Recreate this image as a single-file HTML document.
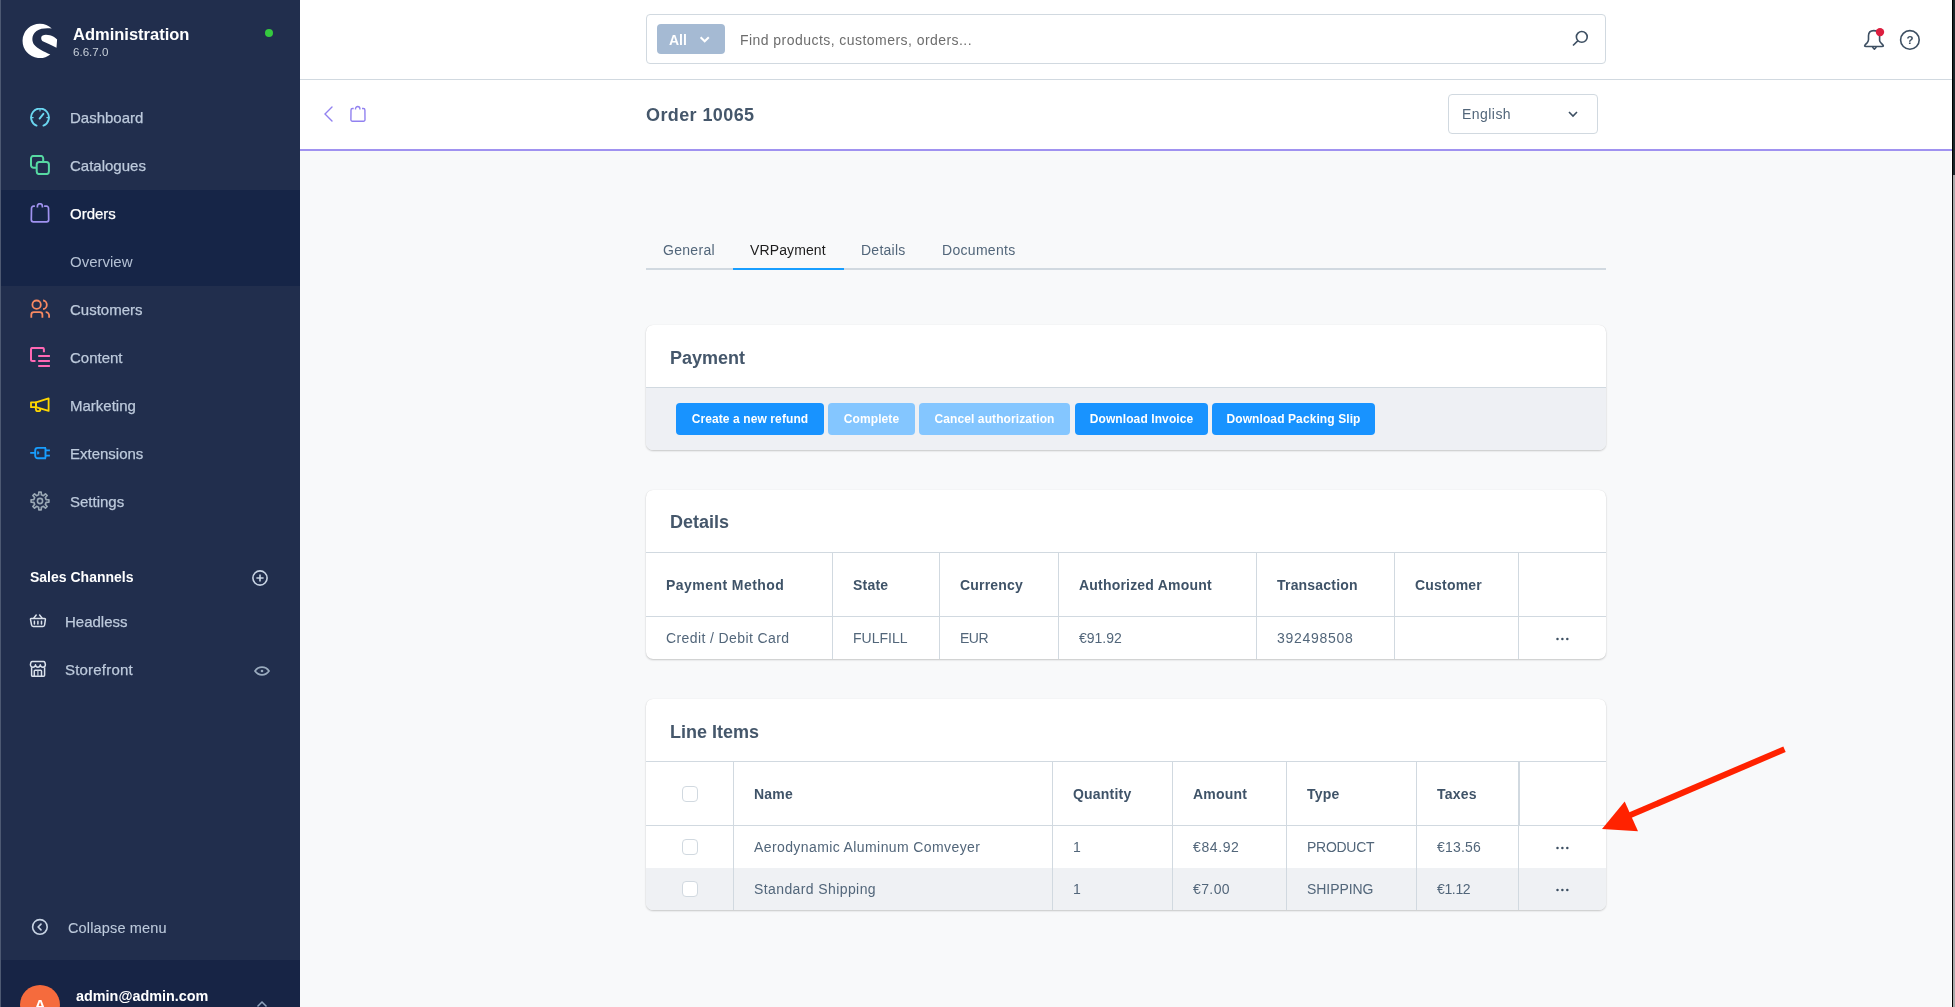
<!DOCTYPE html>
<html><head><meta charset="utf-8">
<style>
*{box-sizing:border-box;margin:0;padding:0}
html,body{width:1955px;height:1007px;overflow:hidden;background:#f8f9fa;font-family:"Liberation Sans",sans-serif}
#root{position:absolute;left:0;top:0;width:1955px;height:1007px;will-change:transform}
.a{position:absolute}
.t{position:absolute;white-space:nowrap;line-height:20px;height:20px}
#side{left:0;top:0;width:300px;height:1007px;background:#212e4d}
#side .mi{font-size:15px;color:#bdcadc;left:70px;-webkit-text-stroke:.25px #bdcadc}
.ic{position:absolute;width:20px;height:20px}
#hdr{left:300px;top:0;width:1652px;height:80px;background:#fff;border-bottom:1px solid #d1d9e0}
#smart{left:300px;top:80px;width:1652px;height:71px;background:#fff;border-bottom:2px solid #a092f0}
.card{position:absolute;left:646px;width:960px;background:#fff;border-radius:7px;box-shadow:0 1px 2px rgba(0,0,0,.2),0 0 1px rgba(0,0,0,.12);overflow:hidden}
.ctitle{position:absolute;left:24px;font-size:18px;font-weight:700;color:#45576b;letter-spacing:0}
.hl{position:absolute;left:0;width:960px;height:1px;background:#d1d9e0}
.vl{position:absolute;width:1px;background:#d1d9e0}
.th{font-size:14px;font-weight:700;color:#3f5368;letter-spacing:.2px}
.td{font-size:14px;color:#52667a;letter-spacing:.4px}
.btn{position:absolute;top:78px;height:32px;border-radius:4px;background:#1893ff;color:#fff;font-size:12px;font-weight:700;line-height:32px;text-align:center;letter-spacing:.1px}
.btn.dis{background:#84c6ff}
.cb{position:absolute;left:36px;width:16px;height:16px;border:1px solid #d1d9e0;border-radius:4px;background:#fff}
.dots{position:absolute;width:14px;height:4px}
</style></head><body><div id="root">

<!-- SIDEBAR -->
<div id="side" class="a">
  <div class="a" style="left:0;top:0;width:1px;height:1007px;background:#4d5972"></div>
  <!-- logo -->
  <svg class="a" style="left:18px;top:18px" width="44" height="44" viewBox="18 18 44 44">
    <path d="M51.8 28.6A17.2 17.2 0 1 0 50.3 54.5C44 51.5 37.5 49 34 44.5C31.3 40.5 31.8 34.5 36.5 31C40.5 28.3 46.5 28 51.8 28.6Z" fill="#fff"/>
    <path d="M41.2 37.5C41.5 34.5 46 34 50 35.3C53 36.3 55.5 37.8 57.1 39.5L56.5 47.8C52 45.5 46.5 43.2 43.3 41.6C41.8 40.8 41 39.5 41.2 37.5Z" fill="#fff"/>
  </svg>
  <div class="t" style="left:73px;top:24px;font-size:16.5px;font-weight:700;color:#fff">Administration</div>
  <div class="t" style="left:73px;top:42px;font-size:11.6px;color:#c8d0da">6.6.7.0</div>
  <div class="a" style="left:265px;top:29px;width:8px;height:8px;border-radius:50%;background:#35c93f"></div>

  <!-- menu -->
  <svg class="ic" style="left:30px;top:108px" viewBox="0 0 20 20" fill="none" stroke="#6bd6f0" stroke-width="1.9" stroke-linecap="round">
    <path d="M6.5 17.6A8.9 8.9 0 1 1 13.5 17.6"/><path d="M10 1v2M1.2 9.6h2M18.8 9.6h-2" stroke-width="1.1"/><path d="M9.6 10.6 13.4 5.8"/>
  </svg>
  <div class="t mi" style="top:108px">Dashboard</div>

  <svg class="ic" style="left:30px;top:155px" viewBox="0 0 20 20" fill="none" stroke="#57d9a3" stroke-width="2">
    <path d="M6.7 12.8H3.5A2.5 2.5 0 0 1 1 10.3V3.4A2.5 2.5 0 0 1 3.5 0.9H10.7A2.5 2.5 0 0 1 13.2 3.4V6.9"/>
    <rect x="6.7" y="6.9" width="12.2" height="12.2" rx="2.5"/>
  </svg>
  <div class="t mi" style="top:156px">Catalogues</div>

  <div class="a" style="left:1px;top:190px;width:299px;height:96px;background:#162547"></div>
  <svg class="ic" style="left:30px;top:203px" viewBox="0 0 20 20" fill="none" stroke="#a092f0" stroke-width="1.7" stroke-linejoin="round">
    <path d="M4.9 3.2H3.5A2 2 0 0 0 1.5 5.2L1.3 16.8A2 2 0 0 0 3.3 18.8H16.7A2 2 0 0 0 18.7 16.8L18.5 5.2A2 2 0 0 0 16.5 3.2H14.1"/>
    <path d="M7.4 4.6V3.2A2.5 2.5 0 0 1 12.4 3.2V4.6"/>
  </svg>
  <div class="t mi" style="top:204px;color:#fff;-webkit-text-stroke:.25px #fff">Orders</div>
  <div class="t mi" style="top:252px;color:#b4c1d4;-webkit-text-stroke:0">Overview</div>

  <svg class="ic" style="left:30px;top:299px" viewBox="0 0 20 20" fill="none" stroke="#f88962" stroke-width="1.8">
    <circle cx="6.6" cy="5.7" r="4.2"/><path d="M13.1 1.5A3.7 4.25 0 0 1 13.1 10"/><path d="M1.3 18.8V15.7A2.5 2.5 0 0 1 3.8 13.2H9.9A2.5 2.5 0 0 1 12.4 15.7V18.8"/><path d="M15.7 13.2A3.4 3.4 0 0 1 19.1 16.6V18.8"/>
  </svg>
  <div class="t mi" style="top:300px">Customers</div>

  <svg class="ic" style="left:30px;top:347px" viewBox="0 0 20 20" fill="none" stroke="#ff68b4" stroke-width="2">
    <path d="M5.5 14.1H2.5A1.5 1.5 0 0 1 1 12.6V2.4A1.5 1.5 0 0 1 2.5 0.9H12.4A1.5 1.5 0 0 1 13.9 2.4V5.2"/><path d="M8.2 9.1H19.9M8.2 14.1H19.9M8.2 19H19.9"/>
  </svg>
  <div class="t mi" style="top:348px">Content</div>

  <svg class="ic" style="left:30px;top:396px" viewBox="0 0 20 20" fill="none" stroke="#ffd700" stroke-width="1.8" stroke-linejoin="round">
    <path d="M1 6.4H6V11.2H1Z"/><path d="M6 6.3 18.6 2.3V14.9L6 11.2Z"/><path d="M5.6 11.6 6.2 14.5A1 1 0 0 0 7.2 15.2H9.4A1 1 0 0 0 10.3 14L9.8 12.4"/>
  </svg>
  <div class="t mi" style="top:396px">Marketing</div>

  <svg class="ic" style="left:30px;top:443px" viewBox="0 0 20 20" fill="none" stroke="#189eff" stroke-width="1.9">
    <path d="M7.7 4.9H15.2L15.5 6V13.9L15.2 15.2H7.7A2.5 2.5 0 0 1 5.2 12.7V7.4A2.5 2.5 0 0 1 7.7 4.9Z"/><path d="M0.2 9.9H5.2M15.5 7.4H19.9M15.5 12.6H19.9"/><path d="M7.6 8.6A1.3 1.3 0 0 1 7.6 11.2Z" fill="#189eff" stroke-width="0.8"/>
  </svg>
  <div class="t mi" style="top:444px">Extensions</div>

  <svg class="ic" style="left:30px;top:491px" viewBox="0 0 20 20" fill="none" stroke="#9aa8b5" stroke-width="1.6" stroke-linejoin="round">
    <path d="M8.63 3.85 L8.80 1.08 L11.20 1.08 L11.37 3.85 L13.38 4.68 L15.46 2.85 L17.15 4.54 L15.32 6.62 L16.15 8.63 L18.92 8.80 L18.92 11.20 L16.15 11.37 L15.32 13.38 L17.15 15.46 L15.46 17.15 L13.38 15.32 L11.37 16.15 L11.20 18.92 L8.80 18.92 L8.63 16.15 L6.62 15.32 L4.54 17.15 L2.85 15.46 L4.68 13.38 L3.85 11.37 L1.08 11.20 L1.08 8.80 L3.85 8.63 L4.68 6.62 L2.85 4.54 L4.54 2.85 L6.62 4.68Z"/><circle cx="10" cy="10" r="2.6"/>
  </svg>
  <div class="t mi" style="top:492px">Settings</div>

  <div class="t" style="left:30px;top:567px;font-size:14px;font-weight:700;color:#fff">Sales Channels</div>
  <svg class="a" style="left:248px;top:566px" width="24" height="24" viewBox="248 566 24 24" fill="none" stroke="#c8d4e4" stroke-width="1.6">
    <circle cx="260" cy="578" r="7.1"/><path d="M260 574.4v7.2M256.4 578h7.2"/>
  </svg>

  <svg class="a" style="left:26px;top:608px" width="24" height="24" viewBox="26 608 24 24" fill="none" stroke="#dbe2ec" stroke-width="1.5" stroke-linejoin="round" stroke-linecap="round">
    <path d="M31.2 618.5H44.6A0.8 0.8 0 0 1 45.4 619.4L44.6 625A1.6 1.6 0 0 1 43 626.4H33.2A1.6 1.6 0 0 1 31.6 625L30.5 619.4A0.8 0.8 0 0 1 31.2 618.5Z"/>
    <path d="M33.9 617.9 36.2 615.1M39.6 615.1 42 617.9M34.4 621.2V624M37.9 621.2V624M41.5 621.2V624"/>
  </svg>
  <div class="t mi" style="top:612px;left:65px">Headless</div>
  <svg class="a" style="left:26px;top:656px" width="24" height="24" viewBox="26 656 24 24" fill="none" stroke="#dbe2ec" stroke-width="1.5" stroke-linejoin="round">
    <path d="M32.4 661.5H43.4A1.6 1.6 0 0 1 44.9 662.5L45.4 664.6C45.4 666.2 44.3 667.2 42.9 667.2C41.5 667.2 40.4 666.2 40.3 664.8C40.1 666.2 39.1 667.2 37.9 667.2C36.7 667.2 35.7 666.2 35.5 664.8C35.4 666.2 34.3 667.2 32.9 667.2C31.5 667.2 30.4 666.2 30.4 664.6L30.9 662.5A1.6 1.6 0 0 1 32.4 661.5Z"/>
    <path d="M31.6 667.2V675.2A1 1 0 0 0 32.6 676.2H43.6A1 1 0 0 0 44.6 675.2V667.2"/>
    <path d="M34.3 676.2V671A0.8 0.8 0 0 1 35.1 670.2H40.7A0.8 0.8 0 0 1 41.5 671V676.2"/>
    <path d="M37.9 670.8V676" stroke="#aeb9c8"/>
  </svg>
  <div class="t mi" style="top:660px;left:65px;letter-spacing:.2px">Storefront</div>
  <svg class="a" style="left:252px;top:662px" width="20" height="18" viewBox="252 662 20 18" fill="none" stroke="#9aabbe" stroke-width="1.7">
    <path d="M255 671C256.8 668.4 259.2 667.2 262 667.2S267.2 668.4 269 671C267.2 673.6 264.8 674.8 262 674.8S256.8 673.6 255 671Z"/><circle cx="262" cy="671" r="1.3" fill="#9aabbe" stroke="none"/>
  </svg>

  <svg class="a" style="left:30px;top:917px" width="20" height="20" viewBox="30 917 20 20" fill="none" stroke="#c8d4e4" stroke-width="1.6" stroke-linecap="round" stroke-linejoin="round">
    <circle cx="39.9" cy="926.9" r="7.3"/><path d="M41 924.1 38.1 927 41 929.9"/>
  </svg>
  <div class="t mi" style="top:918px;left:68px;font-size:14.5px;letter-spacing:.15px;-webkit-text-stroke:.1px #bdcadc">Collapse menu</div>

  <div class="a" style="left:1px;top:960px;width:299px;height:47px;background:#172445"></div>
  <div class="a" style="left:20px;top:985px;width:40px;height:40px;border-radius:50%;background:#f56b3d"></div>
  <div class="t" style="left:20px;top:995px;width:40px;text-align:center;font-size:15.5px;font-weight:700;color:#fff">A</div>
  <div class="t" style="left:76px;top:986px;font-size:14.4px;font-weight:700;color:#fff">admin@admin.com</div>
  <svg class="a" style="left:256px;top:1000px" width="12" height="8" viewBox="0 0 12 8" fill="none" stroke="#8fa3bd" stroke-width="1.5"><path d="M1.5 6.5 6 2l4.5 4.5"/></svg>
</div>

<!-- TOP HEADER -->
<div id="hdr" class="a"></div>
<div class="a" style="left:646px;top:14px;width:960px;height:50px;border:1px solid #d1d9e0;border-radius:4px;background:#fff"></div>
<div class="a" style="left:657px;top:24px;width:68px;height:30px;border-radius:4px;background:#a5bad3"></div>
<div class="t" style="left:669px;top:30px;font-size:14px;font-weight:700;color:#fff">All</div>
<svg class="a" style="left:699px;top:35px" width="12" height="10" viewBox="0 0 12 10" fill="none" stroke="#fff" stroke-width="2"><path d="M1.6 2.2 5.7 6.3 9.8 2.2"/></svg>
<div class="t" style="left:740px;top:30px;font-size:14px;color:#6d6d6d;letter-spacing:.45px">Find products, customers, orders...</div>
<svg class="a" style="left:1571px;top:30px" width="18" height="18" viewBox="0 0 18 18" fill="none" stroke="#3d4f62" stroke-width="1.6"><circle cx="10.8" cy="6.9" r="5.4"/><path d="M7 10.6 2 15.5"/></svg>

<svg class="a" style="left:1855px;top:20px" width="75" height="40" viewBox="1855 20 75 40" fill="none" stroke="#3d4f62" stroke-width="1.6" stroke-linejoin="round">
  <path d="M1879.6 36V40.3C1879.6 41.4 1880 42 1880.8 42.8L1882.8 44.9C1883.8 46 1883.4 46.5 1882 46.5H1866C1864.6 46.5 1864.2 46 1865.1 44.9L1867.3 42.6C1868.1 41.7 1868.5 41 1868.5 39.6V35.8C1868.5 32.6 1870.6 30.6 1873.8 30.6C1875.2 30.6 1876.3 30.8 1877.2 31.2"/>
  <path d="M1872.4 47 1874.4 49.2 1876.4 47"/>
  <circle cx="1880" cy="32.1" r="4.2" fill="#dc1e3f" stroke="none"/>
  <circle cx="1909.9" cy="39.9" r="9.3"/>
</svg>
<div class="t" style="left:1899px;top:30px;width:22px;text-align:center;font-size:11.5px;font-weight:700;color:#3d4f62">?</div>

<!-- SMART BAR -->
<div id="smart" class="a"></div>
<svg class="a" style="left:321px;top:105px" width="14" height="18" viewBox="0 0 14 18" fill="none" stroke="#9181f0" stroke-width="1.4" stroke-linecap="round"><path d="M11 2 4 9l7 7"/></svg>
<svg class="a" style="left:345px;top:100px" width="25" height="25" viewBox="345 100 25 25" fill="none" stroke="#9181f0" stroke-width="1.4" stroke-linejoin="round">
  <path d="M353.7 108.5H352.5A1.5 1.5 0 0 0 351 110L350.9 119.7A1.5 1.5 0 0 0 352.4 121.2H363.5A1.5 1.5 0 0 0 365 119.7L364.9 110A1.5 1.5 0 0 0 363.4 108.5H362"/>
  <path d="M355.5 109.6V108.7A2.2 2.2 0 0 1 359.9 108.7V109.6"/>
</svg>
<div class="t" style="left:646px;top:104px;font-size:18px;font-weight:700;color:#45576b;letter-spacing:.4px;height:22px;line-height:22px">Order 10065</div>
<div class="a" style="left:1448px;top:94px;width:150px;height:40px;border:1px solid #d1d9e0;border-radius:4px;background:#fff"></div>
<div class="t" style="left:1462px;top:104px;font-size:14px;color:#52667a;letter-spacing:.45px">English</div>
<svg class="a" style="left:1567px;top:110px" width="12" height="8" viewBox="0 0 12 8" fill="none" stroke="#3d4f62" stroke-width="1.6"><path d="M2 2l4 4 4-4"/></svg>
<div class="a" style="left:1951px;top:151px;width:1px;height:856px;background:#fff"></div>
<div class="a" style="left:1952px;top:0;width:3px;height:1007px;background:#1c2629"></div>
<div class="a" style="left:1952px;top:0;width:1px;height:1007px;background:#000"></div>
<div class="a" style="left:1953px;top:175px;width:2px;height:832px;background:#a9a9a9"></div>

<!-- TABS -->
<div class="a" style="left:646px;top:268px;width:960px;height:2px;background:#d1d9e0"></div>
<div class="a" style="left:733px;top:268px;width:111px;height:2px;background:#189eff"></div>
<div class="t" style="left:663px;top:240px;font-size:14px;color:#52667a;letter-spacing:.3px">General</div>
<div class="t" style="left:750px;top:240px;font-size:14px;color:#1c1c1c;letter-spacing:.12px">VRPayment</div>
<div class="t" style="left:861px;top:240px;font-size:14px;color:#52667a;letter-spacing:.25px">Details</div>
<div class="t" style="left:942px;top:240px;font-size:14px;color:#52667a;letter-spacing:.3px">Documents</div>


<!-- PAYMENT CARD -->
<div class="card" style="top:325px;height:125px">
  <div class="t ctitle" style="top:22px;height:22px;line-height:22px">Payment</div>
  <div class="a" style="left:0;top:62px;width:960px;height:63px;background:#eef0f4;border-top:1px solid #d1d9e0"></div>
  <div class="btn" style="left:30px;width:148px">Create a new refund</div>
  <div class="btn dis" style="left:182px;width:87px">Complete</div>
  <div class="btn dis" style="left:273px;width:151px">Cancel authorization</div>
  <div class="btn" style="left:429px;width:133px">Download Invoice</div>
  <div class="btn" style="left:566px;width:163px">Download Packing Slip</div>
</div>

<!-- DETAILS CARD -->
<div class="card" style="top:490px;height:169px">
  <div class="t ctitle" style="top:21px;height:22px;line-height:22px">Details</div>
  <div class="hl" style="top:62px"></div>
  <div class="hl" style="top:126px"></div>
  <div class="vl" style="left:186px;top:62px;height:107px"></div>
  <div class="vl" style="left:293px;top:62px;height:107px"></div>
  <div class="vl" style="left:412px;top:62px;height:107px"></div>
  <div class="vl" style="left:610px;top:62px;height:107px"></div>
  <div class="vl" style="left:748px;top:62px;height:107px"></div>
  <div class="vl" style="left:872px;top:62px;height:107px"></div>
  <div class="t th" style="left:20px;top:85px;letter-spacing:.45px">Payment Method</div>
  <div class="t th" style="left:207px;top:85px">State</div>
  <div class="t th" style="left:314px;top:85px">Currency</div>
  <div class="t th" style="left:433px;top:85px">Authorized Amount</div>
  <div class="t th" style="left:631px;top:85px">Transaction</div>
  <div class="t th" style="left:769px;top:85px">Customer</div>
  <div class="t td" style="left:20px;top:138px">Credit / Debit Card</div>
  <div class="t td" style="left:207px;top:138px;letter-spacing:0">FULFILL</div>
  <div class="t td" style="left:314px;top:138px;letter-spacing:-.5px">EUR</div>
  <div class="t td" style="left:433px;top:138px;letter-spacing:0">€91.92</div>
  <div class="t td" style="left:631px;top:138px;letter-spacing:.7px">392498508</div>
  <svg class="dots" style="left:909px;top:147px" viewBox="0 0 14 4"><circle cx="2.5" cy="2" r="1.25" fill="#3d4f62"/><circle cx="7.4" cy="2" r="1.25" fill="#3d4f62"/><circle cx="12.3" cy="2" r="1.25" fill="#3d4f62"/></svg>
</div>

<!-- LINE ITEMS CARD -->
<div class="card" style="top:699px;height:211px">
  <div class="t ctitle" style="top:22px;height:22px;line-height:22px">Line Items</div>
  <div class="hl" style="top:62px"></div>
  <div class="hl" style="top:126px"></div>
  <div class="a" style="left:0;top:169px;width:960px;height:42px;background:#eff1f4"></div>
  <div class="vl" style="left:87px;top:62px;height:149px"></div>
  <div class="vl" style="left:406px;top:62px;height:149px"></div>
  <div class="vl" style="left:526px;top:62px;height:149px"></div>
  <div class="vl" style="left:640px;top:62px;height:149px"></div>
  <div class="vl" style="left:770px;top:62px;height:149px"></div>
  <div class="vl" style="left:872px;top:62px;height:149px"></div>
  <div class="vl" style="left:873px;top:62px;height:64px"></div>
  <div class="cb" style="top:87px"></div>
  <div class="cb" style="top:140px"></div>
  <div class="cb" style="top:182px"></div>
  <div class="t th" style="left:108px;top:85px">Name</div>
  <div class="t th" style="left:427px;top:85px">Quantity</div>
  <div class="t th" style="left:547px;top:85px">Amount</div>
  <div class="t th" style="left:661px;top:85px">Type</div>
  <div class="t th" style="left:791px;top:85px">Taxes</div>
  <div class="t td" style="left:108px;top:138px">Aerodynamic Aluminum Comveyer</div>
  <div class="t td" style="left:427px;top:138px">1</div>
  <div class="t td" style="left:547px;top:138px;letter-spacing:.6px">€84.92</div>
  <div class="t td" style="left:661px;top:138px;letter-spacing:-.28px">PRODUCT</div>
  <div class="t td" style="left:791px;top:138px;letter-spacing:.2px">€13.56</div>
  <div class="t td" style="left:108px;top:180px">Standard Shipping</div>
  <div class="t td" style="left:427px;top:180px">1</div>
  <div class="t td" style="left:547px;top:180px">€7.00</div>
  <div class="t td" style="left:661px;top:180px;letter-spacing:-.07px">SHIPPING</div>
  <div class="t td" style="left:791px;top:180px;letter-spacing:-.35px">€1.12</div>
  <svg class="dots" style="left:909px;top:147px" viewBox="0 0 14 4"><circle cx="2.5" cy="2" r="1.25" fill="#3d4f62"/><circle cx="7.4" cy="2" r="1.25" fill="#3d4f62"/><circle cx="12.3" cy="2" r="1.25" fill="#3d4f62"/></svg>
  <svg class="dots" style="left:909px;top:189px" viewBox="0 0 14 4"><circle cx="2.5" cy="2" r="1.25" fill="#3d4f62"/><circle cx="7.4" cy="2" r="1.25" fill="#3d4f62"/><circle cx="12.3" cy="2" r="1.25" fill="#3d4f62"/></svg>
</div>

<!-- ARROW -->
<svg class="a" style="left:0;top:0" width="1955" height="1007" viewBox="0 0 1955 1007">
  <path d="M1784.5 749.3 1627 816.5" stroke="#ff2200" stroke-width="6" fill="none"/>
  <path d="M1602 829 1624.7 801.5 1638 831.3Z" fill="#ff2200"/>
</svg>

</div></body></html>
